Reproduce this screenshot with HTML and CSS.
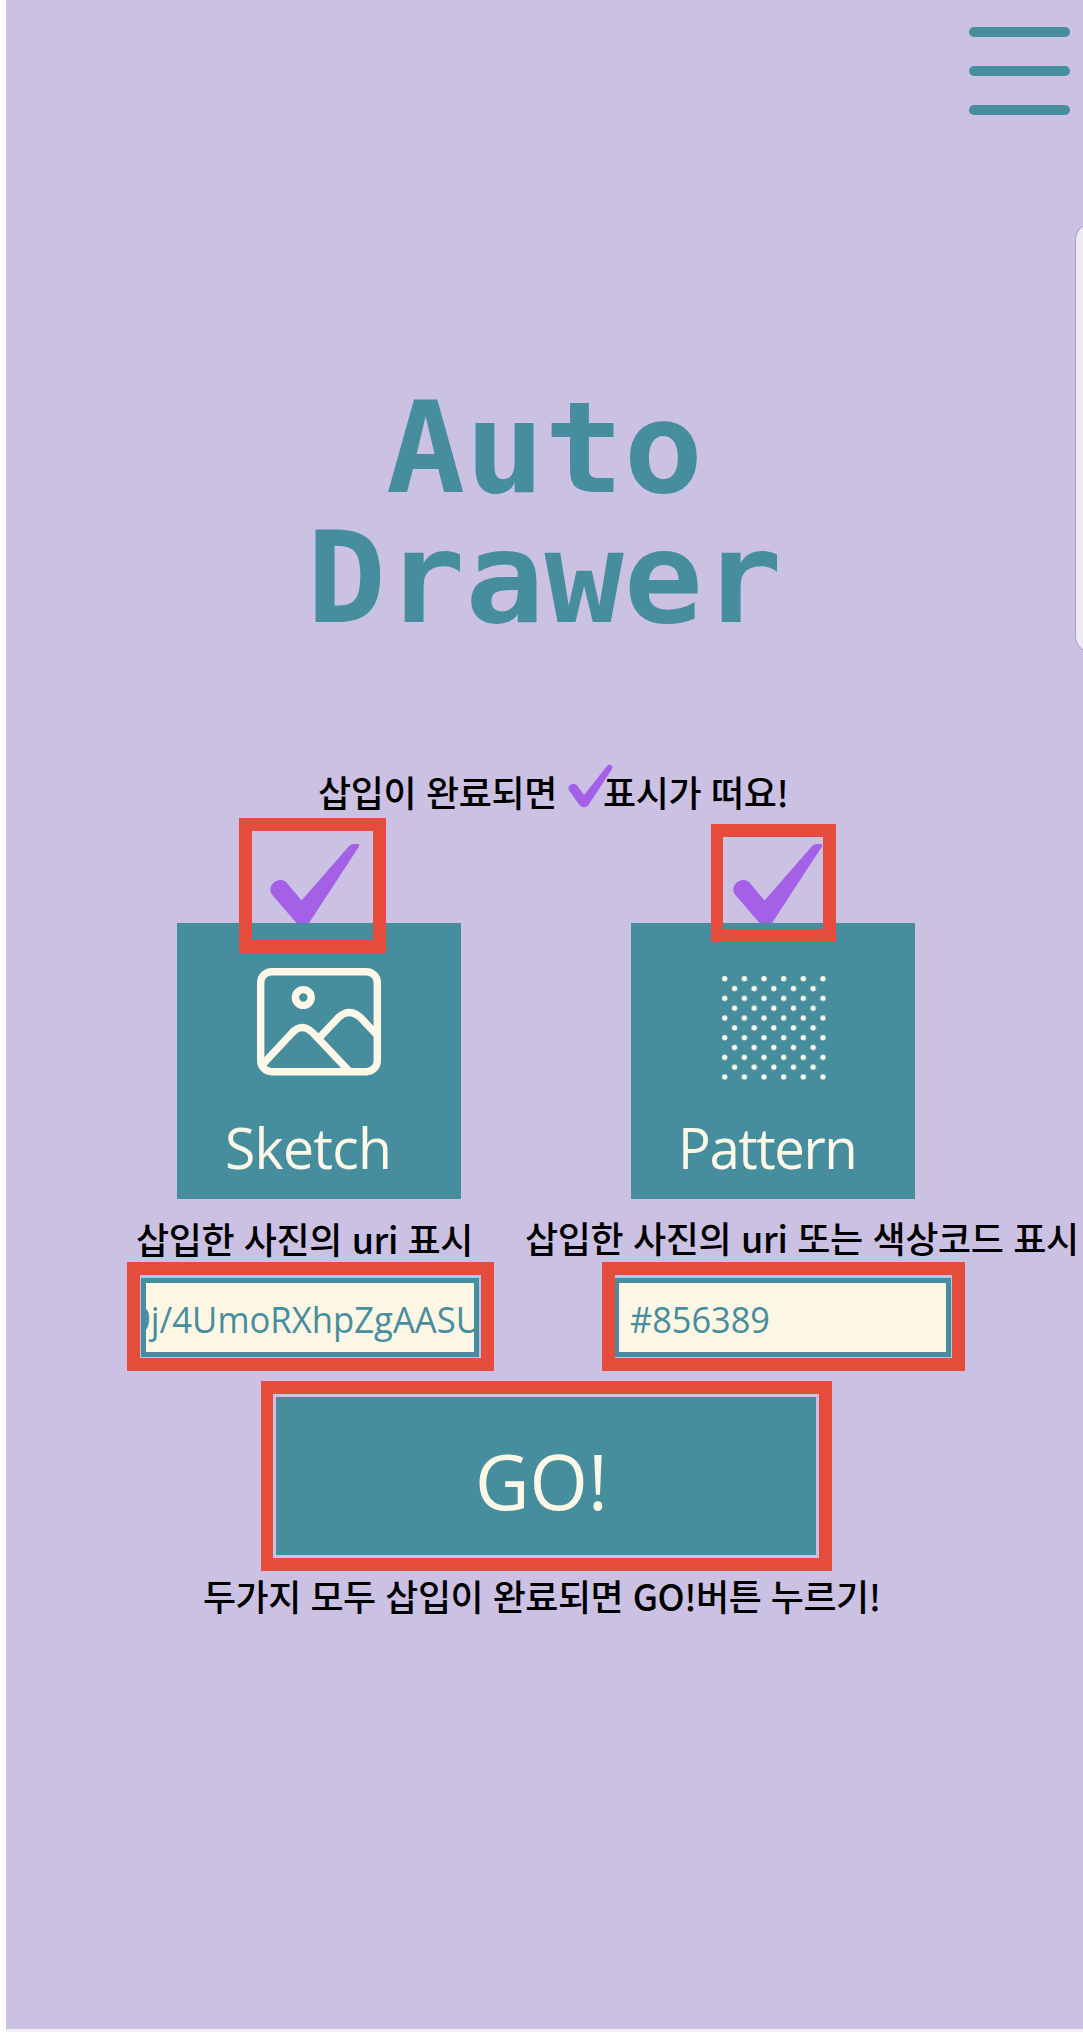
FILE: index.html
```html
<!DOCTYPE html>
<html lang="ko">
<head>
<meta charset="utf-8">
<title>Auto Drawer</title>
<link rel="stylesheet" href="styles.css">
</head>
<body>
<main class="screen">
  <header class="topbar">
    <div class="menu"><span></span><span></span><span></span></div>
  </header>
  <aside class="edge-panel"></aside>
  <h1 class="title">Auto<br>Drawer</h1>
  <p class="hint"><span class="hint-start">삽입이 완료되면</span><svg class="hint-check" viewBox="0 0 45 44"><path d="M1.500 27C-1 24 1 21 4 20C6.500 19.500 8 20.500 9.500 22L16 31L39 2C41 -.5 46 1 44 5L20.500 41C18 44 14 44 11.500 41Z"/></svg><span class="hint-end">표시가 떠요!</span></p>

  <section class="cards">
    <div class="card">
      <svg class="done" viewBox="0 0 90 79"><path d="M1.500 50C-1 45 .5 41 5 37.500C9 35 14 35.500 17 39L31.500 56.500L77 4.500Q80 0 84 0H89V2.500L39 79H26.500Z"/></svg>
      <div class="mark mark-sketch"></div>
      <svg class="picture" viewBox="0 0 124 108" fill="none" stroke="currentColor" stroke-width="7.400">
        <rect x="3.700" y="3.700" width="116.600" height="100" rx="11"/>
        <circle cx="46.300" cy="29.500" r="7.900"/>
        <path d="M6 96L35 65Q45 54 56 65L92 103M62 70L82 49Q92 40 103 49L120 67"/>
      </svg>
      <span class="card-name sketch-name">Sketch</span>
    </div>
    <div class="card">
      <svg class="done" viewBox="0 0 90 79"><path d="M1.500 50C-1 45 .5 41 5 37.500C9 35 14 35.500 17 39L31.500 56.500L77 4.500Q80 0 84 0H89V2.500L39 79H26.500Z"/></svg>
      <div class="mark mark-pattern"></div>
      <svg class="dots" viewBox="0 0 104 104">
        <defs><pattern id="dot-grid" width="19.660" height="19.660" patternUnits="userSpaceOnUse"><circle cx="2.700" cy="2.700" r="2.700"/><circle cx="12.530" cy="12.530" r="2.700"/></pattern></defs>
        <rect width="104" height="104" fill="url(#dot-grid)"/>
      </svg>
      <span class="card-name pattern-name">Pattern</span>
    </div>
  </section>

  <section class="labels">
    <p class="label-sketch">삽입한 사진의 uri 표시</p>
    <p class="label-pattern">삽입한 사진의 uri 또는 색상코드 표시</p>
  </section>

  <section class="fields">
    <div class="frame frame-uri"><div class="field"><span class="uri">9j/4UmoRXhpZgAASUkq</span></div></div>
    <div class="frame frame-code"><div class="field"><span class="code">#856389</span></div></div>
  </section>

  <div class="frame frame-go"><div class="go"><span>GO!</span></div></div>
  <p class="note">두가지 모두 삽입이 완료되면 GO!버튼 누르기!</p>
</main>
</body>
</html>
```
FILE: styles.css
```css
* { box-sizing: border-box; }
body { margin: 0; width: 1083px; height: 2032px; overflow: hidden; background: linear-gradient(90deg, #fff 6px, #f1f0f2 6px); font-family: "Open Sans", "Noto Sans CJK KR", sans-serif; }
p, h1 { margin: 0; }
.screen { position: relative; width: 1077px; height: 2029px; margin-left: 6px; overflow: hidden; background: #cac1e3; display: flex; flex-direction: column; }
.topbar { display: flex; justify-content: flex-end; padding: 27px 13.5px 0 0; }
.menu { display: flex; flex-direction: column; gap: 29px; }
.menu span { width: 100.5px; height: 10px; border-radius: 5px; background: #468e9d; }
.edge-panel { position: absolute; left: 1069px; top: 223px; width: 40px; height: 430px; border: 1px solid #a49fb4; border-radius: 17px; background: #edeaf5; }
.title { margin-top: 269px; text-align: center; font: bold 126px/130px "DejaVu Sans Mono", monospace; color: #468e9d; transform: scaleX(1.045); }
.hint, .labels, .note { font: 500 36px/48px "Noto Sans CJK KR", sans-serif; white-space: pre; color: #000; }
.hint { display: flex; margin-top: 123px; padding-left: 312px; letter-spacing: -0.35px; }
.hint-start { width: 250px; }
.hint-check { width: 45px; height: 44px; margin: -3px -10px 0 0; fill: #a560e8; }
.cards { display: flex; gap: 170px; margin-top: 108px; padding-left: 171px; }
.card { position: relative; width: 284px; height: 276px; background: #468e9d; color: #fcf7e7; display: flex; flex-direction: column; }
.done { position: absolute; left: 93px; top: -79px; width: 90px; height: 79px; fill: #a560e8; }
.card + .card .done { left: 102px; }
.mark { position: absolute; border: 13px solid #e64c3c; }
.mark-sketch { left: 62px; top: -105px; width: 147px; height: 135px; }
.mark-pattern { left: 80px; top: -99px; width: 125px; height: 118px; border-left-width: 12px; }
.picture { width: 124px; height: 108px; margin: 45px 0 0 80px; }
.dots { width: 104px; height: 104px; margin: 53px 0 0 91px; fill: #fcfaeb; }
.card-name { font-size: 57px; line-height: 70px; height: 70px; transform-origin: left; }
.sketch-name { margin: 36px 0 0 48px; letter-spacing: -0.8px; transform: scaleX(0.972); }
.pattern-name { margin: 32px 0 0 47px; letter-spacing: -1.5px; transform: scaleX(0.957); }
.labels { display: flex; margin-top: 15px; padding-left: 130px; }
.label-sketch { width: 389px; letter-spacing: -0.4px; }
.label-pattern { margin-top: -1px; letter-spacing: -0.35px; }
.fields { display: flex; gap: 108px; padding-left: 121px; }
.frame { border: 13px solid #e64c3c; background: #b9c3e8; }
.frame-uri { width: 367px; height: 109px; padding: 3px 2px 1px 1px; }
.frame-code { width: 363px; height: 109px; padding: 3px 1px 1px 0; }
.field { height: 79px; border: 5px solid #468e9d; background: #fcf6e4; color: #468e9d; font-size: 36px; line-height: 74px; overflow: hidden; white-space: pre; display: flex; }
.frame-code .field { border-left-width: 4px; }
.field span { transform-origin: left; }
.uri { margin-left: -15px; transform: scaleX(0.963); }
.code { margin-left: 11px; transform: scaleX(0.953); }
.frame-go { width: 571px; height: 190px; margin: 10px 0 0 255px; padding: 3px; border-width: 13px 13px 13px 12px; background: #cac1e3; }
.go { height: 158px; background: #468e9d; color: #fcf7e7; font-size: 77px; line-height: 167px; padding-left: 199px; }
.go span { display: inline-block; transform-origin: left; transform: scaleX(0.975); }
.note { padding-left: 197px; letter-spacing: -0.5px; }
```
